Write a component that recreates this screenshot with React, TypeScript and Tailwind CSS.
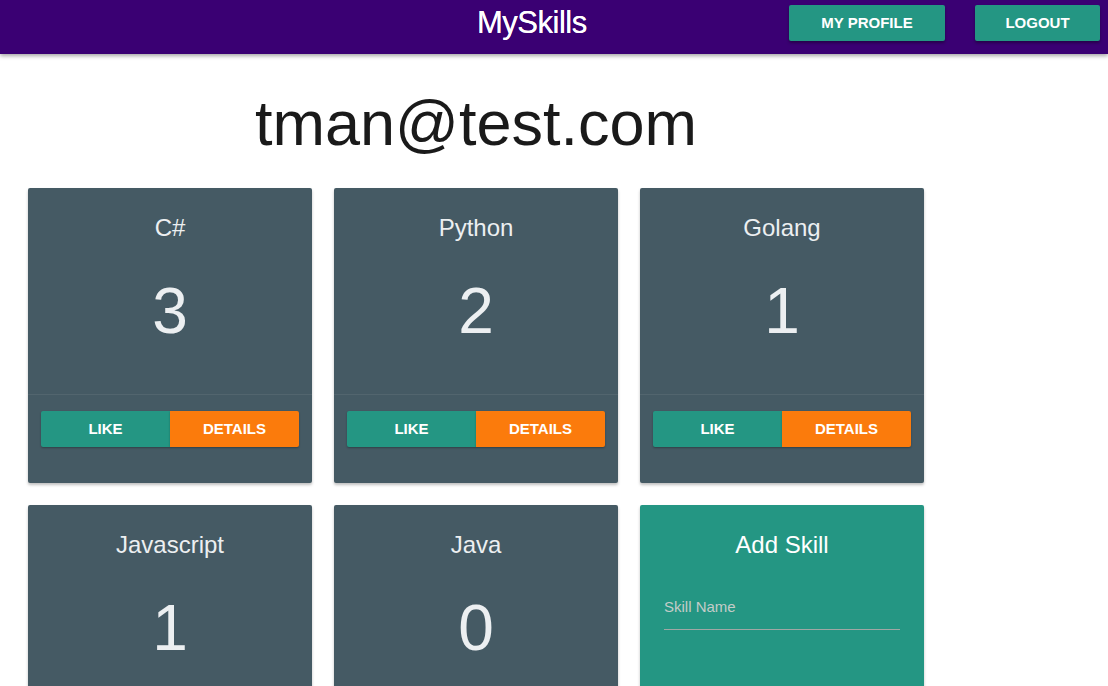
import React from "react";

const skills = [
  { name: "C#", likes: 3 },
  { name: "Python", likes: 2 },
  { name: "Golang", likes: 1 },
  { name: "Javascript", likes: 1 },
  { name: "Java", likes: 0 },
];

function SkillCard({ name, likes }: { name: string; likes: number }) {
  return (
    <div className="w-[284px] h-[295px] bg-[#455a64] rounded-[2px] shadow-[0_2px_3px_rgba(0,0,0,0.25)] flex flex-col">
      <div className="h-[206px] flex flex-col items-center">
        <div className="mt-[24px] h-[32px] leading-[32px] text-[24px] text-[#eceff1]">{name}</div>
        <div className="mt-[35px] h-[64px] leading-[64px] text-[64px] text-[#eceff1]">{likes}</div>
      </div>
      <div className="h-px bg-[#52656e]" />
      <div className="px-[13px] pt-[16px] flex">
        <button className="flex-1 h-[36px] bg-[#249683] text-white font-bold text-[15px] rounded-l-[2px] shadow-[0_1px_2px_rgba(0,0,0,0.3)]">
          LIKE
        </button>
        <button className="flex-1 h-[36px] bg-[#fb7b0c] text-white font-bold text-[15px] rounded-r-[2px] shadow-[0_1px_2px_rgba(0,0,0,0.3)]">
          DETAILS
        </button>
      </div>
    </div>
  );
}

function AddSkillCard() {
  return (
    <div className="w-[284px] h-[295px] bg-[#249683] rounded-[2px] shadow-[0_2px_3px_rgba(0,0,0,0.25)] flex flex-col">
      <div className="mt-[24px] h-[32px] leading-[32px] text-[24px] text-white text-center">Add Skill</div>
      <div className="mx-[24px] mt-[36px] border-b border-[#9fa7a4] pb-[12px]">
        <div className="text-[15px] leading-[20px] text-[#c3ccc8]">Skill Name</div>
      </div>
    </div>
  );
}

export default function App() {
  return (
    <div
      className="w-[1108px] h-[686px] overflow-hidden bg-white"
      style={{ fontFamily: '"Liberation Sans", Arial, sans-serif' }}
    >
      <nav className="h-[54px] bg-[#3a0073] flex items-start pt-[5px] shadow-[0_2px_4px_rgba(0,0,0,0.35)] relative z-10">
        <div className="ml-[477px] mt-[2px] h-[32px] leading-[32px] text-[31px] text-white tracking-[-0.5px] [text-shadow:0_0_0.6px_white]">
          MySkills
        </div>
        <div className="ml-auto mr-[8px] flex gap-[30px]">
          <button className="h-[36px] w-[156px] bg-[#249683] text-white font-bold text-[15px] rounded-[2px] shadow-[0_2px_3px_rgba(0,0,0,0.35)]">
            MY PROFILE
          </button>
          <button className="h-[36px] w-[125px] bg-[#249683] text-white font-bold text-[15px] rounded-[2px] shadow-[0_2px_3px_rgba(0,0,0,0.35)]">
            LOGOUT
          </button>
        </div>
      </nav>
      <div className="ml-[28px] w-[896px]">
        <h1 className="mt-[38px] h-[62px] text-[63px] leading-[62px] text-[#1a1a1a] text-center">tman@test.com</h1>
        <div className="mt-[34px] grid grid-cols-[284px_284px_284px] gap-[22px]">
          {skills.map((s) => (
            <SkillCard key={s.name} name={s.name} likes={s.likes} />
          ))}
          <AddSkillCard />
        </div>
      </div>
    </div>
  );
}
